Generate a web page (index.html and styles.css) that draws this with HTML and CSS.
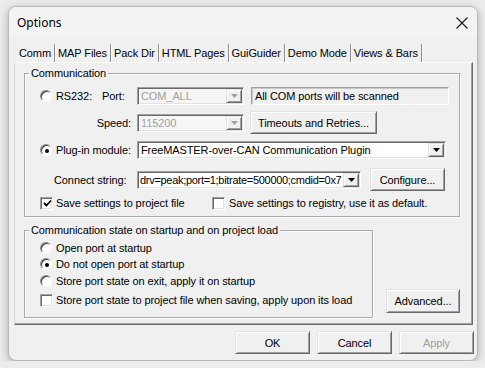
FILE: index.html
```html
<!DOCTYPE html>
<html lang="en">
<head>
  <meta charset="UTF-8">
  <title>Options</title>
  <link rel="stylesheet" href="styles.css">
</head>
<body>
  <div class="window">
    <div class="titlebar">
      <span class="title">Options</span>
      <svg class="close" width="12" height="12" viewBox="0 0 12 12">
        <path d="M0.5 0.5 L11.5 11.5 M11.5 0.5 L0.5 11.5" stroke="#1b1b1b" stroke-width="1.1" fill="none"/>
      </svg>
    </div>

    <div class="tabs">
      <span class="tab active">Comm</span>
      <span class="tab">MAP Files</span>
      <span class="tab">Pack Dir</span>
      <span class="tab">HTML Pages</span>
      <span class="tab">GuiGuider</span>
      <span class="tab">Demo Mode</span>
      <span class="tab">Views &amp; Bars</span>
    </div>

    <div class="panel">
      <fieldset class="group group-comm">
        <legend>Communication</legend>
        <div class="group-body">
          <div class="row row-rs">
            <span class="radio"></span>
            <span class="lbl lbl-rs">RS232:</span>
            <span class="lbl lbl-port">Port:</span>
            <div class="combo disabled w-port">
              <span class="val">COM_ALL</span>
              <span class="drop"><svg width="7" height="4" viewBox="0 0 7 4"><polygon points="0,0 7,0 3.5,4"/></svg></span>
            </div>
            <div class="field">All COM ports will be scanned</div>
          </div>

          <div class="row row-speed">
            <span class="lbl lbl-right">Speed:</span>
            <div class="combo disabled w-port">
              <span class="val">115200</span>
              <span class="drop"><svg width="7" height="4" viewBox="0 0 7 4"><polygon points="0,0 7,0 3.5,4"/></svg></span>
            </div>
            <button class="btn btn-timeouts">Timeouts and Retries...</button>
          </div>

          <div class="row row-plugin">
            <span class="radio checked"></span>
            <span class="lbl lbl-plugin">Plug-in module:</span>
            <div class="combo w-plugin">
              <span class="val">FreeMASTER-over-CAN Communication Plugin</span>
              <span class="drop"><svg width="7" height="4" viewBox="0 0 7 4"><polygon points="0,0 7,0 3.5,4"/></svg></span>
            </div>
          </div>

          <div class="row row-connect">
            <span class="lbl lbl-connect">Connect string:</span>
            <div class="combo w-connect">
              <span class="val val-tight">drv=peak;port=1;bitrate=500000;cmdid=0x7</span>
              <span class="drop"><svg width="7" height="4" viewBox="0 0 7 4"><polygon points="0,0 7,0 3.5,4"/></svg></span>
            </div>
            <button class="btn btn-configure">Configure...</button>
          </div>

          <div class="row row-save">
            <span class="check checked"><svg width="9" height="9" viewBox="0 0 9 9"><polyline points="1,4 3.5,6.5 8,1.5" fill="none" stroke="#000" stroke-width="1.8"/></svg></span>
            <span class="lbl lbl-save">Save settings to project file</span>
            <span class="check"></span>
            <span class="lbl lbl-reg">Save settings to registry, use it as default.</span>
          </div>
        </div>
      </fieldset>

      <div class="state-row">
        <fieldset class="group group-state">
          <legend>Communication state on startup and on project load</legend>
          <div class="group-body">
            <div class="opt"><span class="radio"></span><span class="lbl">Open port at startup</span></div>
            <div class="opt"><span class="radio checked"></span><span class="lbl">Do not open port at startup</span></div>
            <div class="opt opt-third"><span class="radio"></span><span class="lbl">Store port state on exit, apply it on startup</span></div>
            <div class="opt opt-check"><span class="check"></span><span class="lbl">Store port state to project file when saving, apply upon its load</span></div>
          </div>
        </fieldset>
        <button class="btn btn-advanced">Advanced...</button>
      </div>
    </div>

    <div class="actions">
      <button class="btn btn-action">OK</button>
      <button class="btn btn-action">Cancel</button>
      <button class="btn btn-action disabled">Apply</button>
    </div>
  </div>
</body>
</html>
```

FILE: styles.css
```css
* {
  box-sizing: border-box;
}

body {
  margin: 0;
  background: #ececec;
  font-family: "Liberation Sans", Arial, sans-serif;
  font-size: 11px;
  letter-spacing: -0.1px;
  color: #000;
}

.window {
  margin: 6px 0 0 8px;
  width: 470px;
  height: 355px;
  background: #f0f0f0;
  border: 1px solid #b9b9b9;
  border-radius: 8px;
  box-shadow: 0 2px 9px rgba(0,0,0,0.28);
  overflow: hidden;
}

.titlebar {
  height: 31px;
  display: flex;
  align-items: center;
  justify-content: space-between;
  padding: 0 9px 0 8px;
  background: #f3f3f3;
}

.title {
  font-family: "Noto Sans", "Open Sans", sans-serif;
  font-size: 12px;
  letter-spacing: 0;
}

/* tab strip */
.tabs {
  margin: 6px 0 0 7px;
  height: 18px;
  display: flex;
}

.tab {
  line-height: 18px;
  padding: 0 3px;
  border-right: 1px solid #8c8c8c;
  box-shadow: 1px 0 0 #fff;
}

.panel {
  margin-left: 5px;
  width: 459px;
  height: 263px;
  padding: 4px 0 0 9px;
  border: 1px solid;
  border-color: #fff #6d6d6d #6d6d6d #d8d8d8;
  box-shadow: inset -1px -1px 0 #a0a0a0;
}

/* group boxes */
.group {
  margin: 0;
  padding: 0;
  min-width: 0;
  border: 1px solid #aaa;
  box-shadow: inset 1px 1px 0 #fff, 1px 1px 0 #fff;
}

.group legend {
  margin-left: 4px;
  padding: 0 2px;
  line-height: 13px;
  background: #f0f0f0;
}

.group-comm {
  width: 436px;
}

.group-comm .group-body {
  padding: 7px 0 6px 15px;
}

.row {
  display: flex;
  align-items: center;
}

.row-rs { height: 18px; }
.row-speed { height: 23px; margin-top: 6px; }
.row-plugin { height: 18px; margin-top: 7px; }
.row-connect { height: 23px; margin-top: 9px; }
.row-save { height: 14px; margin-top: 5px; }

.lbl {
  white-space: nowrap;
}

.lbl-rs { width: 46px; margin-left: 4px; }
.lbl-port { width: 35px; }
.lbl-right { width: 97px; text-align: right; padding-right: 6px; }
.lbl-plugin { width: 81px; margin-left: 4px; }
.lbl-connect { width: 97px; padding-left: 14px; }
.lbl-save { width: 156px; margin-left: 3px; }
.lbl-reg { margin-left: 4px; }

/* radio and check */
.radio {
  flex: none;
  width: 12px;
  height: 12px;
  border-radius: 50%;
  background: #fff;
  border: 1px solid;
  border-color: #8a8a8a #fff #fff #8a8a8a;
  box-shadow: inset 1px 1px 0 #3c3c3c;
  display: flex;
  align-items: center;
  justify-content: center;
}

.radio.checked::after {
  content: "";
  width: 4px;
  height: 4px;
  border-radius: 50%;
  background: #000;
  margin: 1px 0 0 1px;
}

.check {
  flex: none;
  width: 13px;
  height: 13px;
  background: #fff;
  border: 1px solid;
  border-color: #a0a0a0 #fff #fff #a0a0a0;
  box-shadow: inset 1px 1px 0 #696969, inset -1px -1px 0 #e3e3e3;
  display: flex;
  align-items: center;
  justify-content: center;
}

.check svg {
  margin: 1px 0 0 1px;
}

/* combos and fields */
.combo {
  flex: none;
  height: 18px;
  display: flex;
  background: #fff;
  border: 1px solid;
  border-color: #a0a0a0 #fff #fff #a0a0a0;
  box-shadow: inset 1px 1px 0 #696969, inset -1px -1px 0 #e3e3e3;
  padding: 1px;
}

.combo .val {
  flex: 1;
  min-width: 0;
  padding-left: 2px;
  line-height: 14px;
  white-space: nowrap;
  overflow: hidden;
}

.combo .val-tight {
  padding-left: 1px;
  letter-spacing: -0.3px;
}

.combo .drop {
  flex: none;
  width: 16px;
  height: 14px;
  background: #f0f0f0;
  border: 1px solid;
  border-color: #e3e3e3 #696969 #696969 #e3e3e3;
  box-shadow: inset 1px 1px 0 #fff, inset -1px -1px 0 #a0a0a0;
  display: flex;
  align-items: center;
  justify-content: center;
}

.combo .drop svg {
  fill: #000;
}

.combo.disabled {
  background: #f6f6f6;
}

.combo.disabled .val {
  color: #a0a0a0;
}

.combo.disabled .drop svg {
  fill: #a0a0a0;
}

.w-port { width: 107px; }
.w-plugin { width: 309px; }
.w-connect { width: 224px; }

.field {
  margin-left: 7px;
  width: 198px;
  height: 18px;
  line-height: 16px;
  padding-left: 3px;
  background: #f0f0f0;
  border: 1px solid;
  border-color: #a0a0a0 #fff #fff #a0a0a0;
  box-shadow: inset 1px 1px 0 #c8c8c8;
  white-space: nowrap;
}

/* buttons */
.btn {
  font-family: inherit;
  font-size: 11px;
  letter-spacing: -0.1px;
  color: #000;
  background: #f0f0f0;
  padding: 0;
  border: 1px solid;
  border-color: #e3e3e3 #696969 #696969 #e3e3e3;
  box-shadow: inset 1px 1px 0 #fff, inset -1px -1px 0 #a0a0a0;
  border-radius: 0;
}

.btn.disabled {
  color: #a0a0a0;
}

.btn-timeouts { margin-left: 6px; width: 127px; height: 23px; }
.btn-configure { margin-left: 9px; width: 75px; height: 23px; }

/* startup state group */
.state-row {
  margin-top: 7px;
  display: flex;
  align-items: flex-end;
}

.group-state {
  width: 349px;
}

.group-state .group-body {
  padding: 3px 0 10px 15px;
}

.opt {
  height: 16px;
  display: flex;
  align-items: center;
}

.opt .lbl {
  margin-left: 4px;
}

.opt-third { margin-top: 1px; }
.opt-check { height: 14px; margin-top: 4px; }
.opt-check .lbl { margin-left: 3px; }

.btn-advanced {
  margin: 0 0 5px 13px;
  width: 74px;
  height: 24px;
}

/* dialog buttons */
.actions {
  margin-top: 6px;
  padding-right: 3px;
  display: flex;
  justify-content: flex-end;
  gap: 7px;
}

.btn-action {
  width: 75px;
  height: 23px;
}
```
